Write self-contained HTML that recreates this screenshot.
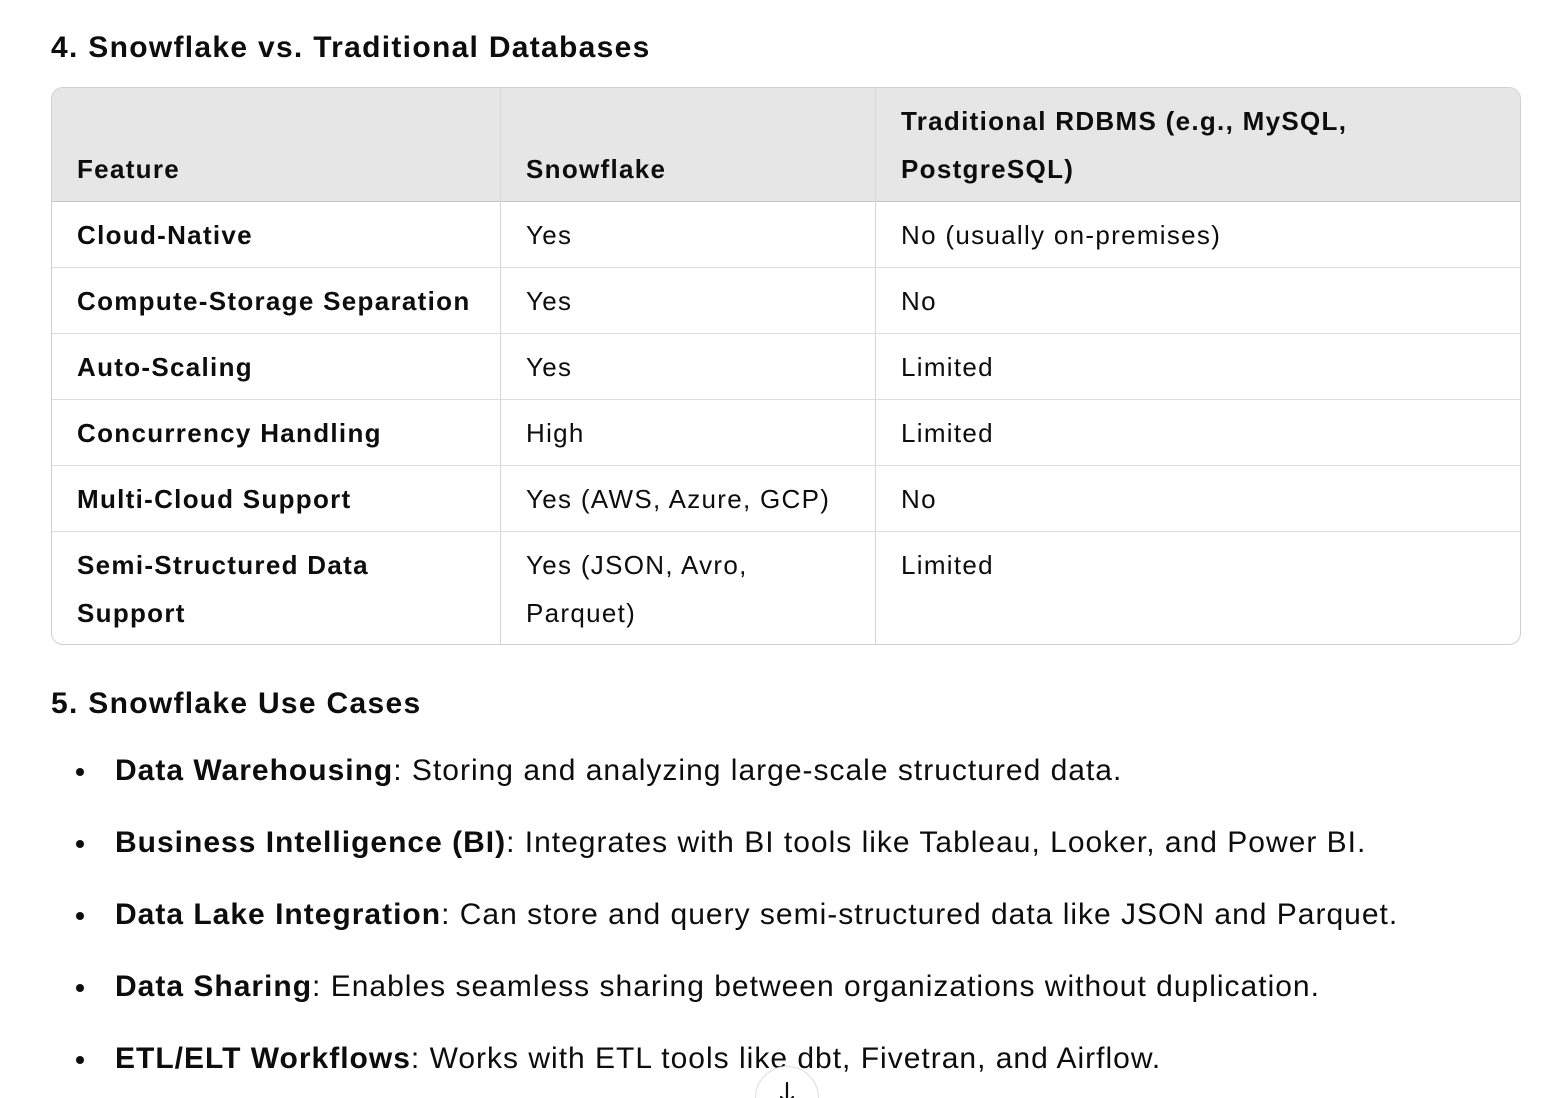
<!DOCTYPE html>
<html><head><meta charset="utf-8"><style>
html,body{margin:0;padding:0;background:#fff;width:1562px;height:1098px;overflow:hidden}
body{font-family:"Liberation Sans",sans-serif;color:#0d0d0d;position:relative}
.h{position:absolute;left:51px;font-weight:bold;font-size:30px;line-height:40px;margin:0;letter-spacing:1.3px}
.tbl{position:absolute;left:51px;top:87px;width:1468px;height:556px;border:1px solid #d0d0d0;border-radius:12px;overflow:hidden}
.hd{position:absolute;left:0;top:0;width:100%;height:113px;background:#e6e6e6;border-bottom:1px solid #c8c8c8}
.vl{position:absolute;top:0;bottom:0;width:1px;background:#d6d6d6}
.hl{position:absolute;left:0;right:0;height:1px;background:#dcdcdc}
.c{position:absolute;font-size:26px;line-height:48px;white-space:nowrap;letter-spacing:1.3px}
.b{font-weight:bold}
ul{position:absolute;left:0;top:735px;margin:0;padding:0;list-style:none}
li{position:relative;height:72px;font-size:30px;line-height:72px;padding-left:115px;white-space:nowrap;letter-spacing:1px}
li:before{content:"";position:absolute;left:76px;top:33px;width:8px;height:8px;border-radius:50%;background:#0d0d0d}
.btn{position:absolute;left:755px;top:1066px;width:62px;height:62px;border-radius:50%;border:1px solid #ddd;background:#fff}
</style></head><body>
<h3 class="h" style="top:28px">4. Snowflake vs. Traditional Databases</h3>
<div class="tbl">
<div class="hd"></div>
<div class="vl" style="left:448px"></div>
<div class="vl" style="left:823px"></div>
<div class="hl" style="top:179px"></div>
<div class="hl" style="top:245px"></div>
<div class="hl" style="top:311px"></div>
<div class="hl" style="top:377px"></div>
<div class="hl" style="top:443px"></div>
<div class="c b" style="left:25px;top:57px">Feature</div>
<div class="c b" style="left:474px;top:57px">Snowflake</div>
<div class="c b" style="left:849px;top:9px">Traditional RDBMS (e.g., MySQL,<br>PostgreSQL)</div>

<div class="c b" style="left:25px;top:123px">Cloud-Native</div>
<div class="c" style="left:474px;top:123px">Yes</div>
<div class="c" style="left:849px;top:123px">No (usually on-premises)</div>

<div class="c b" style="left:25px;top:189px">Compute-Storage Separation</div>
<div class="c" style="left:474px;top:189px">Yes</div>
<div class="c" style="left:849px;top:189px">No</div>

<div class="c b" style="left:25px;top:255px">Auto-Scaling</div>
<div class="c" style="left:474px;top:255px">Yes</div>
<div class="c" style="left:849px;top:255px">Limited</div>

<div class="c b" style="left:25px;top:321px">Concurrency Handling</div>
<div class="c" style="left:474px;top:321px">High</div>
<div class="c" style="left:849px;top:321px">Limited</div>

<div class="c b" style="left:25px;top:387px">Multi-Cloud Support</div>
<div class="c" style="left:474px;top:387px">Yes (AWS, Azure, GCP)</div>
<div class="c" style="left:849px;top:387px">No</div>

<div class="c b" style="left:25px;top:453px">Semi-Structured Data<br>Support</div>
<div class="c" style="left:474px;top:453px">Yes (JSON, Avro,<br>Parquet)</div>
<div class="c" style="left:849px;top:453px">Limited</div>
</div>
<h3 class="h" style="top:684px">5. Snowflake Use Cases</h3>
<ul>
<li><b>Data Warehousing</b>: Storing and analyzing large-scale structured data.</li>
<li><b>Business Intelligence (BI)</b>: Integrates with BI tools like Tableau, Looker, and Power BI.</li>
<li><b>Data Lake Integration</b>: Can store and query semi-structured data like JSON and Parquet.</li>
<li><b>Data Sharing</b>: Enables seamless sharing between organizations without duplication.</li>
<li><b>ETL/ELT Workflows</b>: Works with ETL tools like dbt, Fivetran, and Airflow.</li>
</ul>
<div class="btn"><svg width="62" height="62" style="position:absolute;left:0;top:0"><path d="M31 16v20M25 30l6 6 6-6" stroke="#0d0d0d" stroke-width="2.2" fill="none" stroke-linecap="round"/></svg></div>
</body></html>
